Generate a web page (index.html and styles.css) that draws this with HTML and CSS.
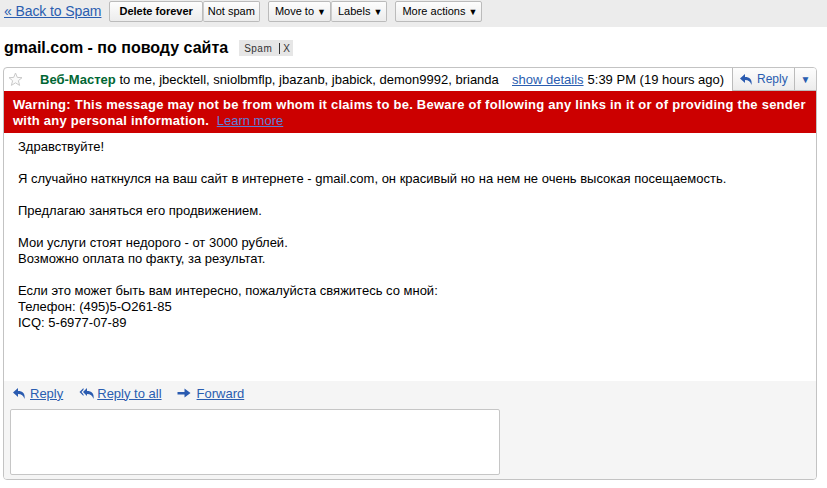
FILE: index.html
```html
<!DOCTYPE html>
<html>
<head>
<meta charset="utf-8">
<link rel="stylesheet" href="styles.css">
</head>
<body>
<div class="toolbar">
  <a class="back" href="#">« Back to Spam</a>
  <div class="btngroup">
    <span class="btn bold">Delete forever</span><span class="btn ns">Not spam</span>
  </div>
  <div class="btngroup">
    <span class="btn dd">Move to <span class="tri">▼</span></span><span class="btn dd">Labels <span class="tri">▼</span></span>
  </div>
  <div class="btngroup">
    <span class="btn dd">More actions <span class="tri">▼</span></span>
  </div>
</div>

<div class="subject">
  <h1>gmail.com - по поводу сайта</h1>
  <span class="label">Spam<span class="sep"></span>X</span>
</div>

<div class="card">
  <div class="head">
    <svg class="star" width="15" height="15" viewBox="0 0 15 15"><path d="M7.5 1 L9.3 5.4 L14 5.7 L10.4 8.7 L11.6 13.4 L7.5 10.8 L3.4 13.4 L4.6 8.7 L1 5.7 L5.7 5.4 Z" fill="#fafafa" stroke="#c8c8c8" stroke-width="1"/></svg>
    <div class="who"><b class="sender">Веб-Мастер</b> to me, jbecktell, sniolbmflp, jbazanb, jbabick, demon9992, brianda</div>
    <a class="details" href="#">show details</a>
    <span class="time">5:39 PM (19 hours ago)</span>
    <div class="replybtn">
      <span class="rb-main"><svg width="15" height="13" viewBox="0 0 15 13"><path d="M6 1 L1 5.5 L6 10 V7 C9.5 7 11.5 8.5 12.5 12 C13.5 6.5 10.5 4 6 4 Z" fill="#2a5bb0"/></svg>Reply</span><span class="rb-drop">▼</span>
    </div>
  </div>
  <div class="warning">Warning: This message may not be from whom it claims to be. Beware of following any links in it or of providing the sender with any personal information. &nbsp;<a href="#">Learn more</a></div>
  <div class="body">
    <p>Здравствуйте!</p>
    <p>Я случайно наткнулся на ваш сайт в интернете - gmail.com, он красивый но на нем не очень высокая посещаемость.</p>
    <p>Предлагаю заняться его продвижением.</p>
    <p>Мои услуги стоят недорого - от 3000 рублей.<br>Возможно оплата по факту, за результат.</p>
    <p>Если это может быть вам интересно, пожалуйста свяжитесь со мной:<br>Телефон: (495)5-О261-85<br>ICQ: 5-6977-07-89</p>
  </div>
  <div class="foot">
    <div class="actions">
      <span class="act"><svg width="15" height="13" viewBox="0 0 15 13"><path d="M6 1 L1 5.5 L6 10 V7 C9.5 7 11.5 8.5 12.5 12 C13.5 6.5 10.5 4 6 4 Z" fill="#2a5bb0"/></svg><a href="#">Reply</a></span>
      <span class="act all"><svg width="16" height="13" viewBox="0 0 16 13"><path d="M4.5 1 L0.5 5 L4.5 9 V7.5 L2.5 5 L4.5 2.8 Z M8 1 L4 5 L8 9 V7 C11.5 7 13.5 8.5 14.5 12 C15.5 6.5 12.5 4 8 4 Z" fill="#2a5bb0"/></svg><a href="#">Reply to all</a></span>
      <span class="act fwd"><svg width="14" height="13" viewBox="0 0 14 13"><path d="M0.5 5 H7.5 V1.5 L13.5 6 L7.5 10.5 V7.5 H0.5 Z" fill="#2a5bb0"/></svg><a href="#">Forward</a></span>
    </div>
    <div class="replybox"></div>
  </div>
</div>
</body>
</html>
```
FILE: styles.css
```css
* { box-sizing: border-box; }
body {
  margin: 0;
  font-family: "Liberation Sans", Arial, sans-serif;
  font-size: 13px;
  color: #000;
  background: #fff;
  width: 827px;
  height: 488px;
  overflow: hidden;
}
a { color: #2a5db0; }

.toolbar {
  height: 27px;
  background: #ececec;
  display: flex;
  align-items: flex-start;
  padding: 1px 0 0 4px;
}
.back {
  font-size: 14px;
  line-height: 20px;
  margin-right: 4px;
  letter-spacing: -0.1px;
}
.btngroup {
  display: flex;
  margin-left: 4px;
}
.btngroup + .btngroup { margin-left: 8px; }
.btn {
  height: 21px;
  line-height: 19px;
  font-size: 11px;
  padding: 0 5px;
  border: 1px solid #bbb;
  background: linear-gradient(#fdfdfd, #ececec);
  border-radius: 2px;
  color: #000;
}
.btn + .btn { border-left: 1px solid #ccc; }
.btn.bold { font-weight: bold; padding: 0 9px; }
.btn.ns { padding: 0 4px; }
.btn.dd { padding: 0 4px 0 6px; }
.tri { font-size: 9px; }

.subject {
  height: 40px;
  display: flex;
  align-items: center;
  padding: 2px 0 0 4px;
}
.subject h1 {
  font-size: 16px;
  margin: 0;
  font-weight: bold;
}
.label {
  margin-left: 11px;
  background: #e6e6e6;
  font-size: 10px;
  height: 16px;
  padding: 0 3px 0 5px;
  color: #333;
  display: flex;
  align-items: center;
  letter-spacing: 0.5px;
}
.label .sep {
  display: inline-block;
  width: 1px;
  height: 11px;
  background: #333;
  margin: 0 3px 0 7px;
}

.card {
  margin-left: 3px;
  width: 814px;
  height: 413px;
  border: 1px solid #c3c3c3;
  border-radius: 4px;
  overflow: hidden;
  display: flex;
  flex-direction: column;
}
.head {
  height: 23px;
  display: flex;
  align-items: center;
  padding-left: 4px;
  white-space: nowrap;
}
.star { margin-right: 17px; flex: none; }
.who {
  width: 468px;
  overflow: hidden;
  margin-right: 4px;
}
.sender { color: #006633; }
.details { margin-right: 4px; }
.replybtn {
  display: flex;
  margin-left: auto;
  height: 23px;
  align-self: flex-start;
}
.rb-main, .rb-drop {
  border: 1px solid #bbb;
  border-top: none;
  background: linear-gradient(#fdfdfd, #ececec);
  color: #2a5db0;
  font-size: 12px;
  display: flex;
  align-items: center;
}
.rb-main { width: 63px; padding-left: 6px; gap: 3px; }
.rb-drop { width: 21px; justify-content: center; font-size: 10px; border-left: none; border-right: none; }

.warning {
  background: #cc0000;
  color: #fff;
  font-weight: bold;
  font-size: 13px;
  line-height: 16px;
  letter-spacing: 0.25px;
  padding: 6px 10px 4px 9px;
}
.warning a { color: #5c7ed8; font-weight: normal; letter-spacing: 0; }

.body {
  height: 248px;
  padding: 6px 14px 0;
  font-size: 13px;
  line-height: 16px;
}
.body p { margin: 0 0 16px 0; }

.foot {
  flex: 1;
  background: #f5f5f5;
  padding: 1px 6px 0 6px;
}
.actions {
  display: flex;
  height: 22px;
  align-items: center;
  gap: 16px;
  padding-left: 2px;
}
.act { display: flex; align-items: center; gap: 3px; }
.act.all { gap: 2px; }
.act.fwd { gap: 6px; margin-left: -1px; }
.replybox {
  margin-top: 5px;
  width: 490px;
  height: 66px;
  background: #fff;
  border: 1px solid #c6c6c6;
  border-radius: 2px;
}
```
